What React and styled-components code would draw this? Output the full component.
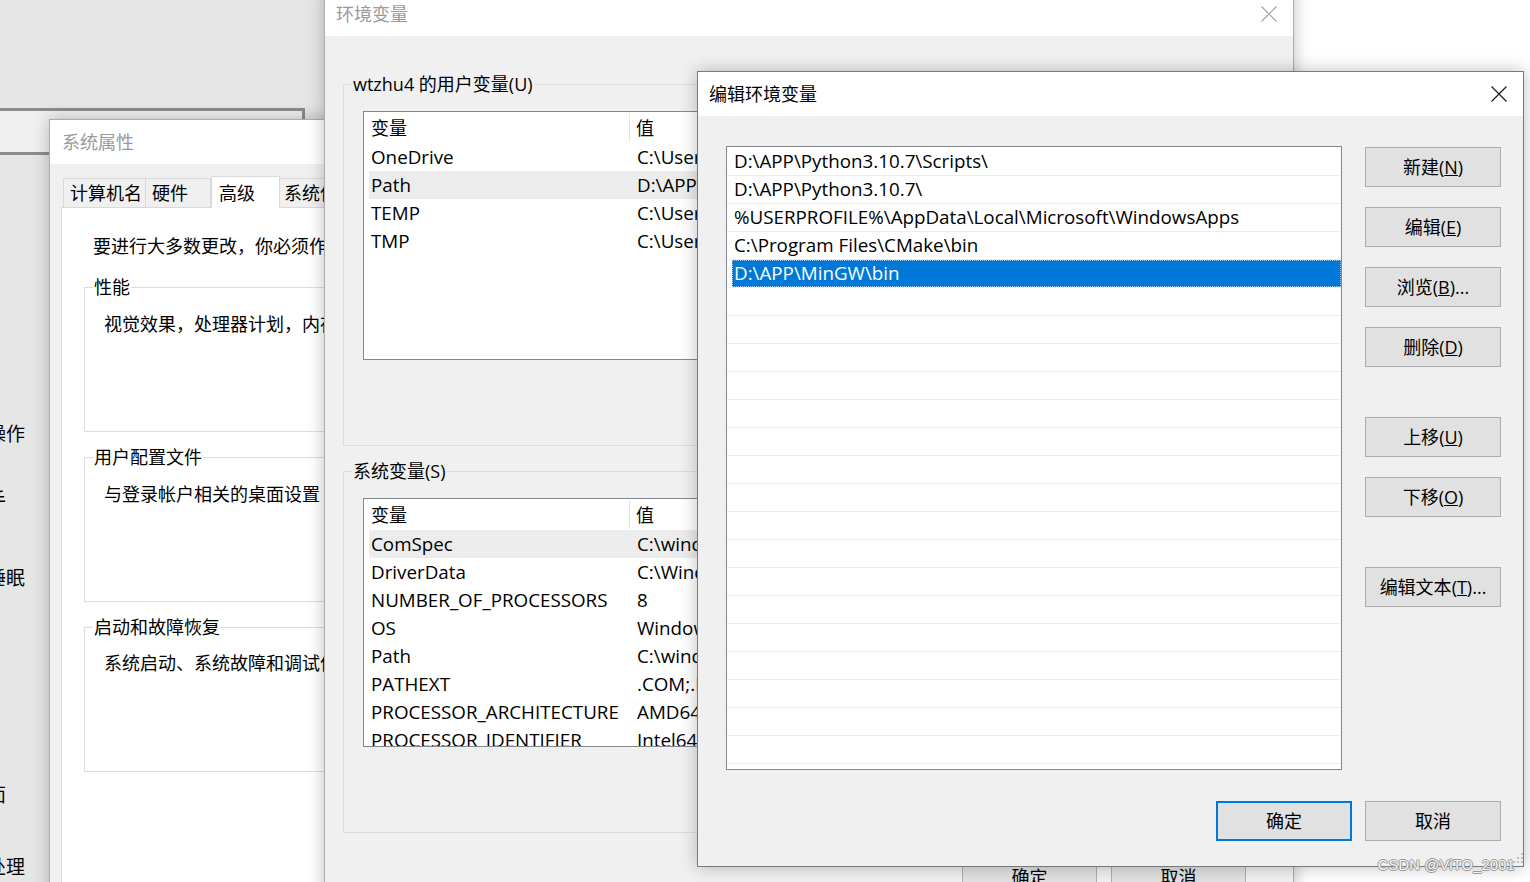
import React from 'react';
import styled, { createGlobalStyle } from 'styled-components';

const UI_FONT = `"Open Sans", "Noto Sans CJK SC", sans-serif`;

const GlobalStyle = createGlobalStyle`
  html, body {
    margin: 0;
    padding: 0;
    background: #fff;
  }
  body {
    font-family: ${UI_FONT};
  }
`;

const Desktop = styled.div`
  position: relative;
  width: 1530px;
  height: 882px;
  overflow: hidden;
  background: #fff;
  font-family: ${UI_FONT};
  font-size: 18px;
  line-height: 24px;
  color: #000;
`;

/* ---------- settings app far behind ---------- */

const SettingsPane = styled.div`
  position: absolute;
  left: 0;
  top: 0;
  width: 330px;
  height: 882px;
  background: #e6e6e6;
  overflow: hidden;
`;

const NavList = styled.div`
  display: flex;
  flex-direction: column;
  margin-left: -70px;
`;

const NavItem = styled.div`
  margin-top: ${p => p.$gap}px;
  height: 24px;
  font-size: 19px;
  white-space: nowrap;
`;

const BackFrame = styled.div`
  position: absolute;
  left: -3px;
  top: 108px;
  width: 308px;
  height: 47px;
  box-sizing: border-box;
  border: 3px solid #8c8c8c;
  background: #f0f0f0;
`;

/* ---------- generic window chrome ---------- */

const Window = styled.div`
  position: absolute;
  left: ${p => p.$x}px;
  top: ${p => p.$y}px;
  width: ${p => p.$w}px;
  height: ${p => p.$h}px;
  box-sizing: border-box;
  border: 1px solid ${p => (p.$active ? '#7a7a7a' : '#acacac')};
  background: #f0f0f0;
  box-shadow: 0 0 16px rgba(0, 0, 0, 0.26);
  display: flex;
  flex-direction: column;
  overflow: hidden;
`;

const TitleBar = styled.div`
  flex: none;
  height: 44px;
  background: #fff;
  display: flex;
  align-items: center;
  justify-content: space-between;
  padding: 0 16px 0 ${p => p.$pl}px;
  color: ${p => (p.$active ? '#000' : '#9a9a9a')};
  white-space: nowrap;
`;

const CloseGlyph = ({ color }) => (
  <svg width="16" height="16" viewBox="0 0 16 16">
    <path d="M0.5 0.5 L15.5 15.5 M15.5 0.5 L0.5 15.5" stroke={color} strokeWidth="1.1" fill="none" />
  </svg>
);

const Button = styled.button`
  flex: none;
  width: ${p => p.$w || 136}px;
  height: 40px;
  box-sizing: border-box;
  margin: ${p => p.$gap || 0}px 0 0 0;
  padding: 0;
  background: #e1e1e1;
  border: ${p => (p.$default ? '2px solid #0078d7' : '1px solid #adadad')};
  font-family: ${UI_FONT};
  font-size: 18px;
  line-height: 24px;
  color: #000;
  white-space: nowrap;
`;

// legend sits 8px in from the box edge; content gets its own inset
const GroupBox = styled.fieldset`
  margin: ${p => p.$mt || 0}px 0 0 0;
  padding: ${p => p.$pt}px 0 ${p => p.$pb}px 0;
  border: 1px solid #dcdcdc;
  min-inline-size: 0;
  width: ${p => p.$w}px;
  box-sizing: border-box;
`;

const GroupLegend = styled.legend`
  margin-left: 8px;
  padding: 0 1px;
  font-size: 18px;
  line-height: 24px;
  white-space: nowrap;
`;

/* ---------- 系统属性 ---------- */

const SysBody = styled.div`
  flex: 1;
  display: flex;
  flex-direction: column;
  padding: 12px 0 0 11px;
`;

const TabStrip = styled.div`
  display: flex;
  align-items: flex-end;
  height: 31px;
  padding-left: 2px;
`;

const Tab = styled.div`
  flex: none;
  width: ${p => p.$w}px;
  height: ${p => (p.$selected ? 32 : 29)}px;
  margin-bottom: ${p => (p.$selected ? -1 : 0)}px;
  box-sizing: border-box;
  border: 1px solid #d9d9d9;
  border-bottom: none;
  border-left: ${p => (p.$first || p.$selected ? '1px solid #d9d9d9' : 'none')};
  background: ${p => (p.$selected ? '#fff' : '#f0f0f0')};
  padding: ${p => (p.$selected ? 1 : 0)}px 0 0 ${p => p.$pl ?? 6}px;
  display: flex;
  align-items: center;
  white-space: nowrap;
  position: relative;
  z-index: ${p => (p.$selected ? 1 : 0)};
`;

const TabPanel = styled.div`
  flex: 1;
  background: #fff;
  border: 1px solid #d9d9d9;
  padding: 26px 0 0 22px;
`;

const Intro = styled.div`
  padding-left: 9px;
  white-space: nowrap;
`;

const GroupText = styled.div`
  padding-left: 19px;
  white-space: nowrap;
`;

/* ---------- 环境变量 ---------- */

const EnvBody = styled.div`
  flex: 1;
  display: flex;
  flex-direction: column;
  padding: 36px 18px 0 18px;
`;

const ListView = styled.div`
  height: 249px;
  margin: 0 19px;
  box-sizing: border-box;
  border: 1px solid #828790;
  background: #fff;
  overflow: hidden;
`;

const ListHeader = styled.div`
  display: grid;
  grid-template-columns: 266px 1fr;
  height: 31px;
`;

const HeaderCell = styled.div`
  display: flex;
  align-items: center;
  padding-left: ${p => p.$pl}px;
  margin: 1px 0;
  border-right: ${p => (p.$sep ? '1px solid #e5e5e5' : 'none')};
`;

const VarRow = styled.div`
  display: grid;
  grid-template-columns: 261px 1fr;
  height: 28px;
  margin-left: 5px;
  align-items: center;
  background: ${p => (p.$hot ? '#ececec' : 'transparent')};
  white-space: nowrap;
`;

const VarCell = styled.span`
  padding-left: ${p => p.$pl}px;
  font-size: 18.8px;
  overflow: hidden;
`;

const EnvFooter = styled.div`
  display: flex;
  justify-content: flex-end;
  gap: 14px;
  margin-top: 24px;
  padding-right: 29px;
`;

/* ---------- 编辑环境变量 ---------- */

const EditBody = styled.div`
  flex: 1;
  display: flex;
  flex-direction: column;
  padding: 30px 22px 0 28px;
`;

const EditMain = styled.div`
  display: flex;
  gap: 23px;
  align-items: flex-start;
`;

const PathList = styled.div`
  width: 616px;
  height: 624px;
  box-sizing: border-box;
  border: 1px solid #828790;
  background: #fff;
  padding-top: 1px;
  overflow: hidden;
`;

const PathRow = styled.div`
  height: 28px;
  box-sizing: border-box;
  border-bottom: 1px solid #ededed;
  display: flex;
`;

const PathCell = styled.div`
  flex: 1;
  margin-left: 5px;
  padding-left: 2px;
  height: 27px;
  line-height: 27px;
  box-sizing: border-box;
  font-size: 18.8px;
  white-space: nowrap;
  background: ${p => (p.$selected ? '#0078d7' : 'transparent')};
  color: ${p => (p.$selected ? '#fff' : '#000')};
  outline: ${p => (p.$selected ? '1px dotted #9cc8f0' : 'none')};
  outline-offset: -1px;
`;

const ButtonColumn = styled.div`
  display: flex;
  flex-direction: column;
  padding-top: 1px;
`;

const EditFooter = styled.div`
  display: flex;
  justify-content: flex-end;
  gap: 13px;
  margin-top: 31px;
`;

const Watermark = styled.div`
  position: absolute;
  right: 15px;
  top: 855px;
  font-family: "Liberation Sans", Arial, sans-serif;
  font-size: 14.5px;
  line-height: 20px;
  color: rgba(255, 255, 255, 0.92);
  text-shadow: 1px 0 0 #9a9a9a, -1px 0 0 #9a9a9a, 0 1px 0 #9a9a9a, 0 -1px 0 #9a9a9a;
  letter-spacing: 0.3px;
`;

const Grip = styled.svg`
  position: absolute;
  left: 1512px;
  top: 852px;
`;

const userVars = [
  ['OneDrive', 'C:\\Users\\wtzhu4\\OneDrive'],
  ['Path', 'D:\\APP\\Python3.10.7\\Scripts\\;D:\\APP\\Python3.10.7\\'],
  ['TEMP', 'C:\\Users\\wtzhu4\\AppData\\Local\\Temp'],
  ['TMP', 'C:\\Users\\wtzhu4\\AppData\\Local\\Temp'],
];

const sysVars = [
  ['ComSpec', 'C:\\windows\\system32\\cmd.exe'],
  ['DriverData', 'C:\\Windows\\System32\\Drivers\\DriverData'],
  ['NUMBER_OF_PROCESSORS', '8'],
  ['OS', 'Windows_NT'],
  ['Path', 'C:\\windows\\system32;C:\\windows'],
  ['PATHEXT', '.COM;.EXE;.BAT;.CMD;.VBS'],
  ['PROCESSOR_ARCHITECTURE', 'AMD64'],
  ['PROCESSOR_IDENTIFIER', 'Intel64 Family 6 Model 140'],
];

const paths = [
  'D:\\APP\\Python3.10.7\\Scripts\\',
  'D:\\APP\\Python3.10.7\\',
  '%USERPROFILE%\\AppData\\Local\\Microsoft\\WindowsApps',
  'C:\\Program Files\\CMake\\bin',
  'D:\\APP\\MinGW\\bin',
];

const navItems = [
  ['通知和操作', 422],
  ['专注助手', 42],
  ['电源和睡眠', 54],
  ['远程桌面', 193],
  ['多任务处理', 48],
];

const VarList = ({ rows, hot }) => (
  <ListView>
    <ListHeader>
      <HeaderCell $pl={7} $sep>变量</HeaderCell>
      <HeaderCell $pl={6}>值</HeaderCell>
    </ListHeader>
    {rows.map(([name, value], i) => (
      <VarRow key={name + i} $hot={i === hot}>
        <VarCell $pl={2}>{name}</VarCell>
        <VarCell $pl={7}>{value}</VarCell>
      </VarRow>
    ))}
  </ListView>
);

const Accel = ({ label, k, tail = '' }) => (
  <>
    {label}(<u>{k}</u>){tail}
  </>
);

export default function App() {
  const rows = Array.from({ length: 22 }, (_, i) => paths[i] || '');

  return (
    <Desktop>
      <GlobalStyle />

      <SettingsPane>
        <NavList>
          {navItems.map(([text, gap]) => (
            <NavItem key={text} $gap={gap}>{text}</NavItem>
          ))}
        </NavList>
      </SettingsPane>

      <BackFrame />

      <Window $x={49} $y={119} $w={440} $h={820}>
        <TitleBar $pl={12}>系统属性</TitleBar>
        <SysBody>
          <TabStrip>
            <Tab $w={83} $first>计算机名</Tab>
            <Tab $w={65}>硬件</Tab>
            <Tab $w={69} $pl={7} $selected>高级</Tab>
            <Tab $w={100} $pl={4}>系统保护</Tab>
            <Tab $w={80}>远程</Tab>
          </TabStrip>
          <TabPanel>
            <Intro>要进行大多数更改，你必须作为管理员登录。</Intro>
            <GroupBox $mt={17} $w={390} $pt={13} $pb={95}>
              <GroupLegend>性能</GroupLegend>
              <GroupText>视觉效果，处理器计划，内存使用，以及虚拟内存</GroupText>
            </GroupBox>
            <GroupBox $mt={13} $w={390} $pt={13} $pb={95}>
              <GroupLegend>用户配置文件</GroupLegend>
              <GroupText>与登录帐户相关的桌面设置</GroupText>
            </GroupBox>
            <GroupBox $mt={13} $w={390} $pt={12} $pb={96}>
              <GroupLegend>启动和故障恢复</GroupLegend>
              <GroupText>系统启动、系统故障和调试信息</GroupText>
            </GroupBox>
          </TabPanel>
        </SysBody>
      </Window>

      <Window $x={324} $y={-9} $w={970} $h={920}>
        <TitleBar $pl={11}>
          环境变量
          <CloseGlyph color="#a0a0a0" />
        </TitleBar>
        <EnvBody>
          <GroupBox $w={930} $pt={15} $pb={85}>
            <GroupLegend>wtzhu4 的用户变量(U)</GroupLegend>
            <VarList rows={userVars} hot={1} />
          </GroupBox>
          <GroupBox $mt={13} $w={930} $pt={15} $pb={85}>
            <GroupLegend>系统变量(S)</GroupLegend>
            <VarList rows={sysVars} hot={0} />
          </GroupBox>
          <EnvFooter>
            <Button $w={135}>确定</Button>
            <Button $w={135}>取消</Button>
          </EnvFooter>
        </EnvBody>
      </Window>

      <Window $x={697} $y={71} $w={827} $h={796} $active>
        <TitleBar $pl={11} $active>
          编辑环境变量
          <CloseGlyph color="#111" />
        </TitleBar>
        <EditBody>
          <EditMain>
            <PathList>
              {rows.map((p, i) => (
                <PathRow key={i}>
                  <PathCell $selected={i === 4}>{p}</PathCell>
                </PathRow>
              ))}
            </PathList>
            <ButtonColumn>
              <Button><Accel label="新建" k="N" /></Button>
              <Button $gap={20}><Accel label="编辑" k="E" /></Button>
              <Button $gap={20}><Accel label="浏览" k="B" tail="..." /></Button>
              <Button $gap={20}><Accel label="删除" k="D" /></Button>
              <Button $gap={50}><Accel label="上移" k="U" /></Button>
              <Button $gap={20}><Accel label="下移" k="O" /></Button>
              <Button $gap={50}><Accel label="编辑文本" k="T" tail="..." /></Button>
            </ButtonColumn>
          </EditMain>
          <EditFooter>
            <Button $default>确定</Button>
            <Button>取消</Button>
          </EditFooter>
        </EditBody>
      </Window>

      <Grip width="11" height="11" viewBox="0 0 11 11">
        {[[9, 1], [9, 5], [5, 5], [9, 9], [5, 9], [1, 9]].map(([x, y]) => (
          <rect key={`${x}-${y}`} x={x} y={y} width="2" height="2" fill="#bdbdbd" />
        ))}
      </Grip>

      <Watermark>CSDN @ViTO_2001</Watermark>
    </Desktop>
  );
}
